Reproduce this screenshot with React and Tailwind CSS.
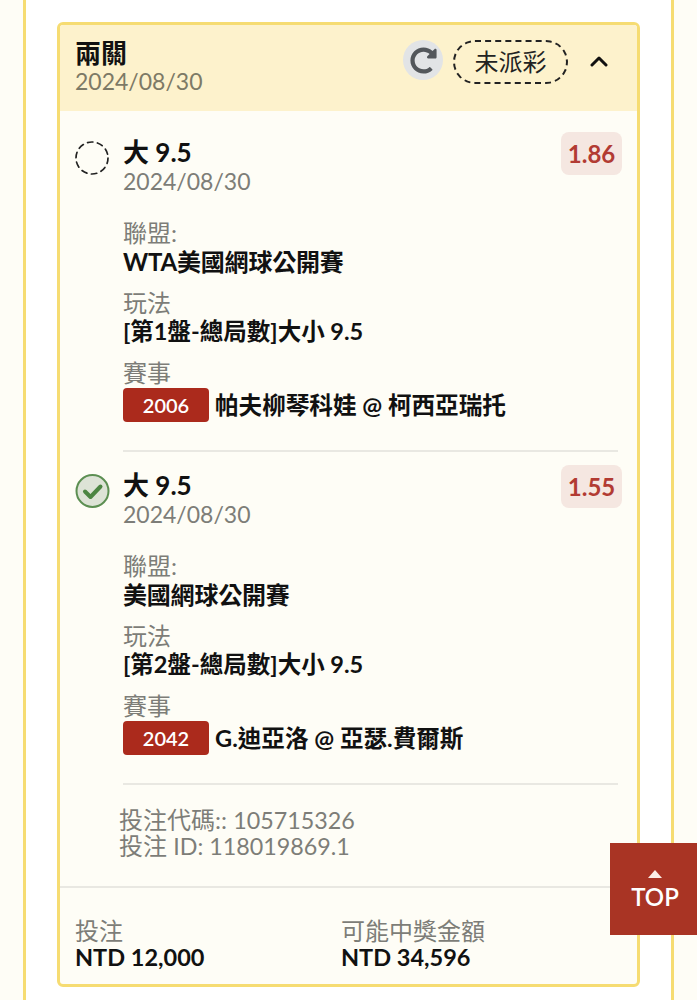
import React from 'react';
import { FaRedoAlt } from 'react-icons/fa';

const FONT = "font-['Lato','Noto_Sans_CJK_TC','Noto_Sans',sans-serif]";

const legs = [
  {
    status: 'pending',
    pick: '大 9.5',
    date: '2024/08/30',
    odds: '1.86',
    league: 'WTA美國網球公開賽',
    market: '[第1盤-總局數]大小 9.5',
    code: '2006',
    match: '帕夫柳琴科娃 @ 柯西亞瑞托',
  },
  {
    status: 'won',
    pick: '大 9.5',
    date: '2024/08/30',
    odds: '1.55',
    league: '美國網球公開賽',
    market: '[第2盤-總局數]大小 9.5',
    code: '2042',
    match: 'G.迪亞洛 @ 亞瑟.費爾斯',
  },
];

const StatusIcon = ({ status }) => {
  if (status === 'won') {
    return (
      <svg width="35" height="36" viewBox="0 0 35 36" className="shrink-0 -mt-px">
        <circle cx="17.5" cy="18" r="16" fill="#dde3d6" stroke="#5c8f52" strokeWidth="2" />
        <path d="M10 18.5l5.5 5.5L25.5 13.5" fill="none" stroke="#4c8542" strokeWidth="4" strokeLinecap="round" strokeLinejoin="round" />
      </svg>
    );
  }
  return (
    <svg width="35" height="35" viewBox="0 0 35 35" className="shrink-0">
      <circle cx="17" cy="17" r="16" fill="none" stroke="#222" strokeWidth="1.7" strokeDasharray="5.5 4.55" strokeLinecap="round" />
    </svg>
  );
};

const Leg = ({ leg }) => (
  <div className="flex">
    <div className="w-[48px] shrink-0 pt-[3px]">
      <StatusIcon status={leg.status} />
    </div>
    <div className="flex-1 min-w-0">
      <div className="flex justify-between items-start">
        <div>
          <div className="text-[26px] leading-[29px] font-bold text-[#111]">{leg.pick}</div>
          <div className="text-[23px] leading-[29px] text-[#7d7d78]">{leg.date}</div>
        </div>
        <div className="h-[43px] w-[61px] -mt-[6px] -mr-[4px] rounded-lg bg-[#f5e7e1] flex items-center justify-center text-[24px] font-bold text-[#b23b33]">
          {leg.odds}
        </div>
      </div>
      <div className="mt-[22px] text-[24px] leading-[29px] text-[#7d7d78]">聯盟:</div>
      <div className="text-[24px] leading-[29px] font-bold text-[#111] tracking-[-0.2px]">{leg.league}</div>
      <div className="mt-[12px] text-[24px] leading-[29px] text-[#7d7d78]">玩法</div>
      <div className="text-[23.5px] leading-[29px] font-bold text-[#111]">{leg.market}</div>
      <div className="mt-[12px] text-[24px] leading-[29px] text-[#7d7d78]">賽事</div>
      <div className="mt-[1px] flex items-center gap-[6px]">
        <span className="w-[86px] h-[34px] bg-[#ab2a1c] rounded-[4px] flex items-center justify-center text-white text-[20px] font-semibold">
          {leg.code}
        </span>
        <span className="text-[23.6px] leading-[34px] font-bold text-[#111]">{leg.match}</span>
      </div>
    </div>
  </div>
);

const App = () => {
  return (
    <div className={`${FONT} h-screen overflow-hidden bg-[#fefdf6] relative`}>
      <div className="mx-[23px] w-[651px] h-full bg-white border-x-[3px] border-[#f6dc72] pt-[22px] pl-[31px]">
        <div className="w-[583px] h-[965px] rounded-[6px] border-[3px] border-[#f6dc72] bg-[#fefdf6] overflow-hidden flex flex-col">
          <div className="h-[86px] shrink-0 bg-[#fdf2cc] pl-[16px] pr-[29px] flex items-center justify-between">
            <div className="-mt-[3px] -ml-[1px]">
              <div className="text-[26px] leading-[28px] font-bold text-[#111]">兩關</div>
              <div className="text-[23px] leading-[28px] text-[#7d7a66]">2024/08/30</div>
            </div>
            <div className="flex items-start self-start mt-[15px]">
              <div className="w-[40px] h-[40px] rounded-full bg-[#e2e4e6] flex items-center justify-center">
                <FaRedoAlt className="w-[27px] h-[27px] text-[#53575b]" />
              </div>
              <div className="ml-[10px] w-[115px] h-[44px] rounded-[22px] border-2 border-dashed border-[#222] flex items-center justify-center text-[24px] text-[#222]">
                未派彩
              </div>
              <svg width="18" height="12" viewBox="0 0 18 12" className="ml-[22px] mt-[15px]">
                <path d="M2 10l7-7 7 7" fill="none" stroke="#111" strokeWidth="3" strokeLinecap="round" strokeLinejoin="round" />
              </svg>
            </div>
          </div>
          <div className="flex-1 pl-[15px] pr-[19px] pt-[27px]">
            <Leg leg={legs[0]} />
            <div className="ml-[48px] mt-[28px] mb-[19px] h-[2px] bg-[#e9e8e2]" />
            <Leg leg={legs[1]} />
            <div className="ml-[48px] mt-[28px] h-[2px] bg-[#e9e8e2]" />
            <div className="ml-[44px] mt-[22px] text-[24px] leading-[26px] text-[#7d7d78]">
              <div>投注代碼:: <span className="text-[23.3px]">105715326</span></div>
              <div>投注 <span className="text-[23.3px]">ID: 118019869.1</span></div>
            </div>
          </div>
          <div className="h-[98px] shrink-0 border-t-2 border-[#e9e8e2] pl-[15px] pt-[30px] flex">
            <div className="w-[266px]">
              <div className="text-[24px] leading-[26px] text-[#7d7d78]">投注</div>
              <div className="text-[23.5px] leading-[26px] font-bold text-[#111]">NTD 12,000</div>
            </div>
            <div>
              <div className="text-[24px] leading-[26px] text-[#7d7d78]">可能中獎金額</div>
              <div className="text-[23.5px] leading-[26px] font-bold text-[#111]">NTD 34,596</div>
            </div>
          </div>
        </div>
      </div>
      <div className="absolute left-[610px] top-[843px] w-[87px] h-[92px] bg-[#a93424] flex flex-col items-center pl-[3px] pt-[27px] text-white">
        <svg width="14" height="8" viewBox="0 0 14 8">
          <path d="M7 0l7 8H0z" fill="#fbeee6" />
        </svg>
        <span className="mt-[4px] text-[24px] leading-[30px] font-semibold">TOP</span>
      </div>
    </div>
  );
};

export default App;
